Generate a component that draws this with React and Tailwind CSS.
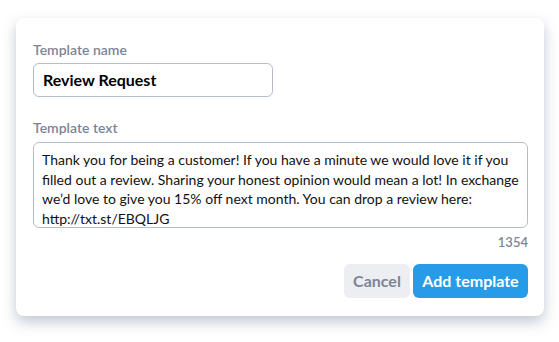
export default function App() {
  return (
    <div className="w-[559px] h-[342px] bg-white pt-[18px] pl-[16px]" style={{ fontFamily: '"Lato", "Open Sans", sans-serif' }}>
      <div className="w-[528px] h-[298px] bg-white rounded-[8px] shadow-[0_6px_14px_rgba(80,95,130,0.35)] px-[17px] pt-[24px]">
        <div className="text-[14px] text-[#7c8597] leading-[16px] font-semibold">Template name</div>
        <div className="mt-[5px] w-[240px] h-[34px] border border-[#b7bdc8] rounded-[6px] flex items-center pl-[9px] text-[16px] font-bold text-black">Review Request</div>
        <div className="mt-[23px] text-[14px] text-[#7c8597] leading-[16px] font-semibold">Template text</div>
        <div className="mt-[6px] w-[495px] h-[86px] border border-[#b7bdc8] rounded-[6px] px-[8px] pt-[7px] text-[14px] leading-[19.6px] text-[#111]">
          Thank you for being a customer! If you have a minute we would love it if you filled out a review. Sharing your honest opinion would mean a lot! In exchange we’d love to give you 15% off next month. You can drop a review here: http://txt.st/EBQLJG
        </div>
        <div className="w-[495px] text-right text-[13px] text-[#7c8597] mt-[7px] leading-[14px] font-semibold">1354</div>
        <div className="w-[495px] flex justify-end gap-[3px] mt-[15px]">
          <div className="w-[66px] h-[34px] rounded-[6px] bg-[#eceef2] text-[#7c8597] text-[16px] font-bold flex items-center justify-center">Cancel</div>
          <div className="w-[115px] h-[34px] rounded-[6px] bg-[#279be8] text-white text-[16px] font-bold flex items-center justify-center">Add template</div>
        </div>
      </div>
    </div>
  );
}
